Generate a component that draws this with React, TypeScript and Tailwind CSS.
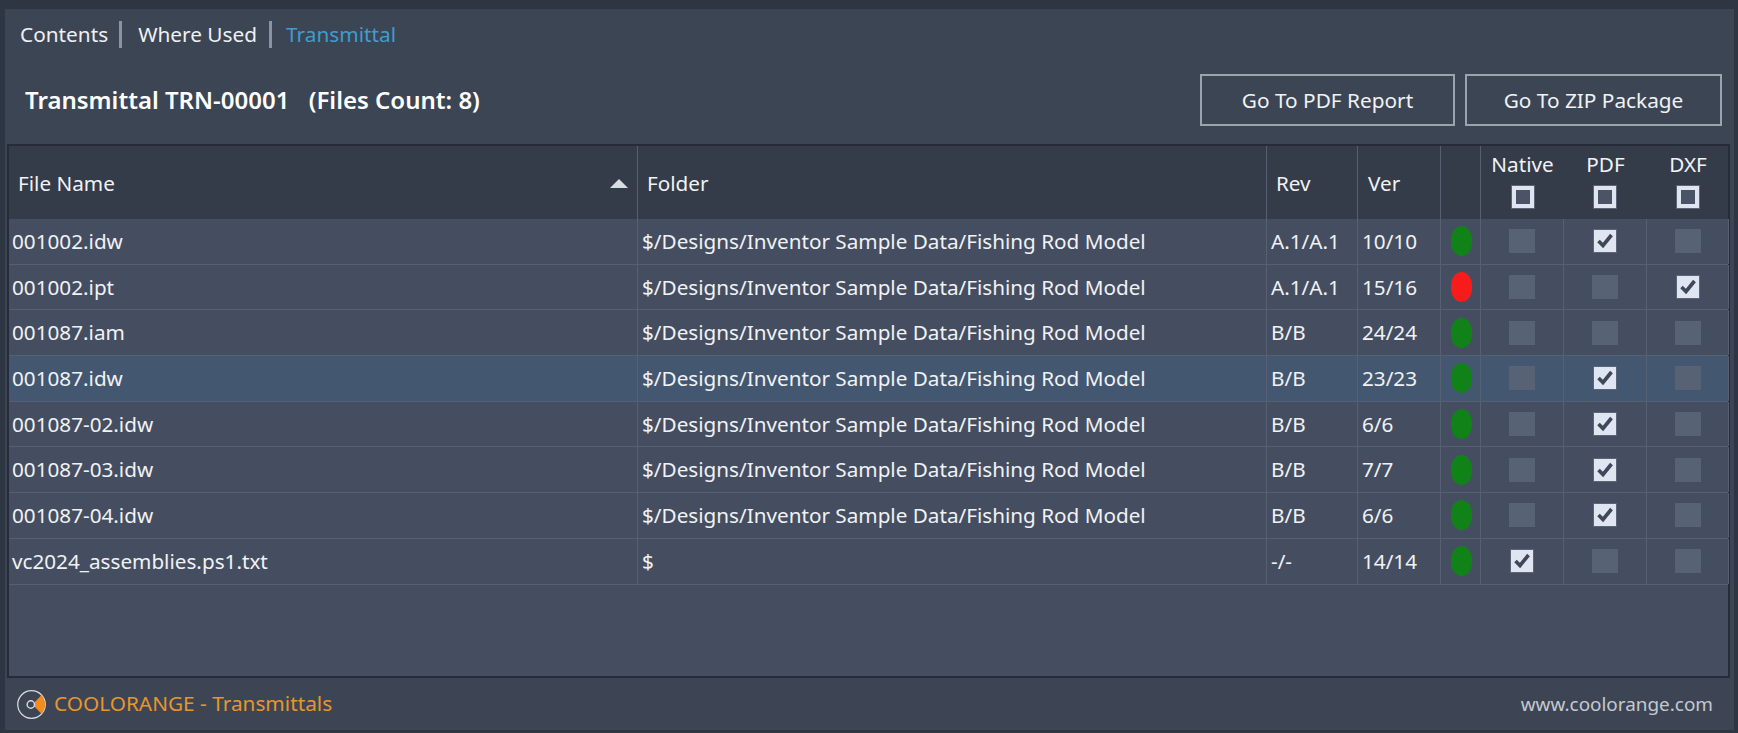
const GRID = "grid grid-cols-[629px_629px_91px_83px_40px_83px_83px_82px]";
const CELL_BORDER = "border-r border-[#566072]";

interface FileRow {
  name: string;
  folder: string;
  rev: string;
  ver: string;
  ok: boolean;
  native: boolean;
  pdf: boolean;
  dxf: boolean;
}

const FOLDER = "$/Designs/Inventor Sample Data/Fishing Rod Model";

const rows: FileRow[] = [
  { name: "001002.idw", folder: FOLDER, rev: "A.1/A.1", ver: "10/10", ok: true, native: false, pdf: true, dxf: false },
  { name: "001002.ipt", folder: FOLDER, rev: "A.1/A.1", ver: "15/16", ok: false, native: false, pdf: false, dxf: true },
  { name: "001087.iam", folder: FOLDER, rev: "B/B", ver: "24/24", ok: true, native: false, pdf: false, dxf: false },
  { name: "001087.idw", folder: FOLDER, rev: "B/B", ver: "23/23", ok: true, native: false, pdf: true, dxf: false },
  { name: "001087-02.idw", folder: FOLDER, rev: "B/B", ver: "6/6", ok: true, native: false, pdf: true, dxf: false },
  { name: "001087-03.idw", folder: FOLDER, rev: "B/B", ver: "7/7", ok: true, native: false, pdf: true, dxf: false },
  { name: "001087-04.idw", folder: FOLDER, rev: "B/B", ver: "6/6", ok: true, native: false, pdf: true, dxf: false },
  { name: "vc2024_assemblies.ps1.txt", folder: "$", rev: "-/-", ver: "14/14", ok: true, native: true, pdf: false, dxf: false },
];

function CheckBox({ checked }: { checked: boolean }) {
  if (!checked) {
    return <span className="block h-6 w-[26px] bg-[#576274]" />;
  }
  return (
    <span className="flex h-6 w-6 items-center justify-center border border-[#5b6577] bg-[#dfe6f2]">
      <svg viewBox="0 0 20 20" className="h-5 w-5" fill="none" stroke="#3f4858" strokeWidth="3.6">
        <path d="M3.5 10 L8 14.5 L16.5 4" />
      </svg>
    </span>
  );
}

function HeaderCheck({ label }: { label: string }) {
  return (
    <div className="flex flex-col items-center">
      <span className="text-[20.7px] leading-[26px] text-[#f0f2f5]">{label}</span>
      <span className="mt-[9px] block h-[22px] w-[22px] border-[4px] border-[#dfe6f2] bg-[#4a5466] outline outline-1 outline-[#5b6577]" />
    </div>
  );
}

function Logo() {
  return (
    <svg viewBox="0 0 32 32" className="h-[31px] w-[31px] shrink-0">
      <circle cx="16" cy="16" r="14.2" fill="none" stroke="#d5dae2" strokeWidth="1.3" />
      <path d="M17 16 L26.2 6.5 A 14 14 0 0 1 26.2 25.5 Z" fill="#f28c1e" />
      <circle cx="15.3" cy="16" r="3.8" fill="#3c4553" stroke="#d5dae2" strokeWidth="1.5" />
    </svg>
  );
}

function GhostButton({ label, width }: { label: string; width: string }) {
  return (
    <button className={`h-[52px] ${width} border-2 border-[#9aa3ae] pt-[2px] text-[20.8px] text-[#f0f2f5]`}>
      {label}
    </button>
  );
}

export default function App() {
  return (
    <div
      className="h-[733px] w-[1738px] overflow-hidden bg-[#2e3543] pt-[9px] pb-[3px] pl-[5px] pr-[4px] text-[#f0f2f5]"
      style={{ fontFamily: '"Noto Sans", "Open Sans", sans-serif' }}
    >
      <div className="flex h-full flex-col bg-gradient-to-b from-[#3c4553] to-[#3d4555]">
        {/* Tabs */}
        <div className="flex h-[51px] shrink-0 items-center pl-[15px] text-[20.8px]">
          <span className="text-[#eef0f3]">Contents</span>
          <span className="ml-[11px] mr-4 h-[27px] w-[3px] bg-[#8b93a0]" />
          <span className="text-[#eef0f3]">Where Used</span>
          <span className="ml-3 mr-[14px] h-[27px] w-[3px] bg-[#8b93a0]" />
          <span className="text-[#3f9ccf]">Transmittal</span>
        </div>

        {/* Title row */}
        <div className="flex h-[84px] shrink-0 items-start justify-between pl-5 pr-[12px] pt-[14px]">
          <h1 className="pt-[6px] text-[24px] font-semibold leading-[40px] text-white">
            Transmittal TRN-00001 <span className="ml-[13px]">(Files Count: 8)</span>
          </h1>
          <div className="flex gap-[10px]">
            <GhostButton label="Go To PDF Report" width="w-[255px]" />
            <GhostButton label="Go To ZIP Package" width="w-[257px]" />
          </div>
        </div>

        {/* Table */}
        <div className="ml-[2px] mr-1 h-[534px] shrink-0 border-2 border-[#262c38] bg-[#454e60]">
          <div className={`${GRID} h-[73px] bg-[#343b49] text-[20.7px]`}>
            <div className={`${CELL_BORDER} flex items-center justify-between pl-[9px] pr-[9px] pt-[2px]`}>
              <span>File Name</span>
              <svg viewBox="0 0 18 9" className="h-[9px] w-[18px]">
                <path d="M0 9 L9 0 L18 9 Z" fill="#d8dde3" />
              </svg>
            </div>
            <div className={`${CELL_BORDER} flex items-center pl-[9px] pt-[2px]`}>Folder</div>
            <div className={`${CELL_BORDER} flex items-center pl-[9px] pt-[2px]`}>Rev</div>
            <div className={`${CELL_BORDER} flex items-center pl-[10px] pt-[2px]`}>Ver</div>
            <div className={CELL_BORDER} />
            <div className="flex items-start justify-center pt-[5px]"><HeaderCheck label="Native" /></div>
            <div className="flex items-start justify-center pt-[5px]"><HeaderCheck label="PDF" /></div>
            <div className="flex items-start justify-center pt-[5px]"><HeaderCheck label="DXF" /></div>
          </div>

          {rows.map((r, i) => (
            <div
              key={r.name}
              className={`${GRID} h-[45.7px] border-b border-[#566072] text-[20.7px] ${
                i === 3 ? "bg-[#435870]" : "bg-[#454e60]"
              }`}
            >
              <div className={`${CELL_BORDER} flex items-center pl-[3px]`}>{r.name}</div>
              <div className={`${CELL_BORDER} flex items-center pl-1`}>{r.folder}</div>
              <div className={`${CELL_BORDER} flex items-center pl-1`}>{r.rev}</div>
              <div className={`${CELL_BORDER} flex items-center pl-1`}>{r.ver}</div>
              <div className={`${CELL_BORDER} flex items-center justify-center pl-[2px]`}>
                <span className={`block h-[30px] w-[21px] rounded-[50%/45%] ${r.ok ? "bg-[#118218]" : "bg-[#f81b1b]"}`} />
              </div>
              <div className={`${CELL_BORDER} flex items-center justify-center`}><CheckBox checked={r.native} /></div>
              <div className={`${CELL_BORDER} flex items-center justify-center`}><CheckBox checked={r.pdf} /></div>
              <div className={`${CELL_BORDER} flex items-center justify-center`}><CheckBox checked={r.dxf} /></div>
            </div>
          ))}
        </div>

        {/* Footer */}
        <div className="flex flex-1 items-center justify-between pl-[11px] pr-[21px]">
          <div className="flex items-center gap-[7px]">
            <Logo />
            <span className="text-[20.8px] text-[#e8952c]">COOLORANGE - Transmittals</span>
          </div>
          <span className="text-[18.9px] text-[#c4c9d0]">www.coolorange.com</span>
        </div>
      </div>
    </div>
  );
}
